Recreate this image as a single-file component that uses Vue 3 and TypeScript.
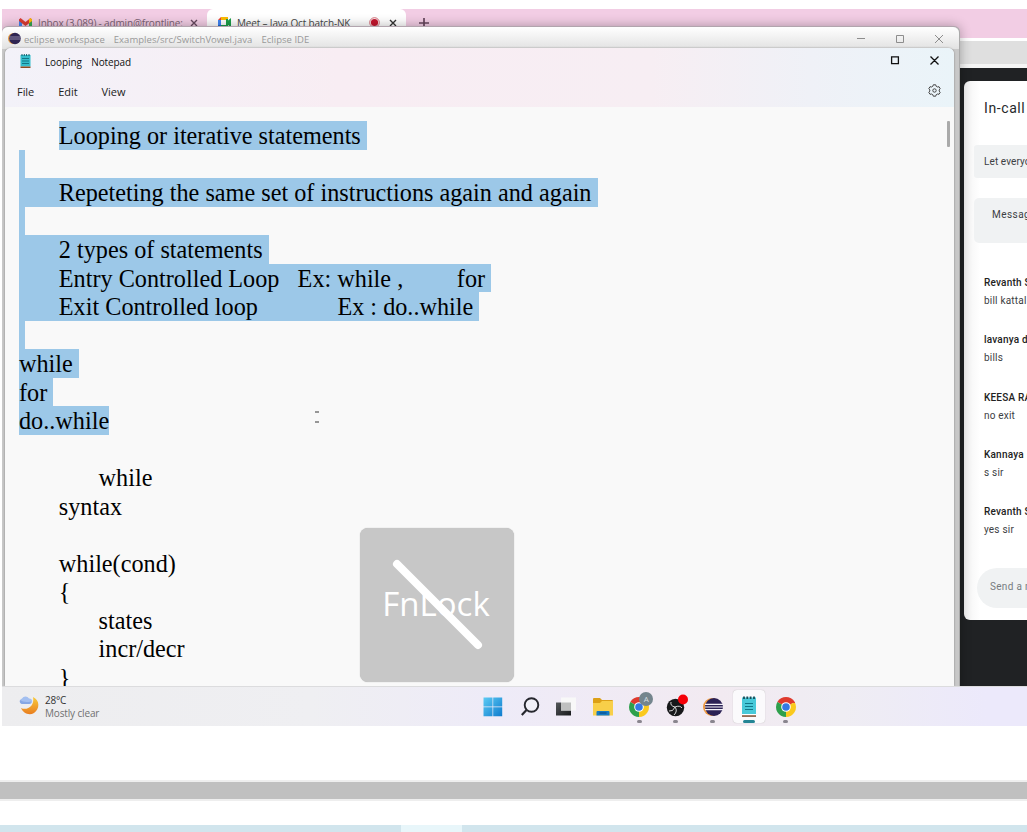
<script setup lang="ts">
interface EditorLine {
  lead?: string
  text: string
  selected?: boolean
}

interface ChatMessage {
  author: string
  body: string
}

const lines: EditorLine[] = [
  { lead: '\t', text: 'Looping or iterative statements ', selected: true },
  { text: ' ', selected: true },
  { text: '\tRepeteting the same set of instructions again and again ', selected: true },
  { text: ' ', selected: true },
  { text: '\t2 types of statements ', selected: true },
  { text: '\tEntry Controlled Loop\tEx: while ,\t\tfor ', selected: true },
  { text: '\tExit Controlled loop\t\tEx : do..while ', selected: true },
  { text: ' ', selected: true },
  { text: 'while ', selected: true },
  { text: 'for ', selected: true },
  { text: 'do..while', selected: true },
  { text: '' },
  { text: '\t\twhile' },
  { text: '\tsyntax' },
  { text: '' },
  { text: '\twhile(cond)' },
  { text: '\t{' },
  { text: '\t\tstates' },
  { text: '\t\tincr/decr' },
  { text: '\t}' },
]

const messages: ChatMessage[] = [
  { author: 'Revanth S', body: 'bill kattal' },
  { author: 'lavanya d', body: 'bills' },
  { author: 'KEESA RA', body: 'no exit' },
  { author: 'Kannaya', body: 's sir' },
  { author: 'Revanth S', body: 'yes sir' },
]
</script>

<template>
  <main class="page">
    <section class="screen">
      <div class="browser">
        <div class="tabs">
          <div class="tab inbox">
            <svg class="gmail" width="13" height="10" viewBox="0 0 13 10">
              <path d="M0 1v9h3V3z" fill="#4285f4" />
              <path d="M13 1v9h-3V3z" fill="#34a853" />
              <path d="M0 1.500L1.500 0 6.500 4 11.500 0 13 1.500V3L6.500 8 0 3z" fill="#dc3b32" />
              <path d="M10 1.200L11.500 0 13 1.500V3l-3 2.300z" fill="#fbbc04" />
            </svg>
            <span class="tab-title">Inbox (3,089) - admin@frontline:</span>
            <svg class="cross" width="8" height="8" viewBox="0 0 8 8"><path d="M1 1l6 6M7 1L1 7" /></svg>
          </div>
          <div class="tab active">
            <svg class="meet" width="13" height="11" viewBox="0 0 13 11">
              <path d="M3 0h7v3H3z" fill="#fbbc04" />
              <path d="M3 0v3H0z" fill="#ea4335" />
              <path d="M0 3h3v5H0z" fill="#4285f4" />
              <path d="M0 8h3v3H1L0 10z" fill="#1967d2" />
              <path d="M3 8h7v3H3zM9.500 4L13 1v9.500l-3.500-3z" fill="#1e9e4a" />
              <path d="M8 2h2v7H8z" fill="#1e9e4a" />
            </svg>
            <span class="tab-title meet-title">Meet – Java Oct batch-NK</span>
            <svg class="rec" width="11" height="11" viewBox="0 0 11 11">
              <circle cx="5.500" cy="5.500" r="4.800" fill="#fff" stroke="#cf5b68" stroke-width=".9" />
              <circle cx="5.500" cy="5.500" r="3.600" fill="#c5162e" />
            </svg>
            <svg class="cross dark" width="8" height="8" viewBox="0 0 8 8"><path d="M1 1l6 6M7 1L1 7" /></svg>
          </div>
          <svg class="plus" width="10" height="10" viewBox="0 0 10 10"><path d="M5 0v10M0 5h10" stroke="#65455c" stroke-width="1.700" /></svg>
        </div>
        <div class="toolbar"></div>
        <div class="call">
          <aside class="panel">
            <h2>In-call</h2>
            <div class="notice">Let everyo</div>
            <div class="info">Messag</div>
            <ul class="messages">
              <li v-for="(m, i) in messages" :key="i">
                <b>{{ m.author }}</b>
                <span>{{ m.body }}</span>
              </li>
            </ul>
            <div class="send">Send a m</div>
          </aside>
        </div>
      </div>

      <div class="eclipse">
        <header class="eclipse-bar">
          <svg width="13" height="13" viewBox="0 0 13 13">
            <circle cx="5.500" cy="6.500" r="5.500" fill="#e49b44" />
            <circle cx="7" cy="6.500" r="5.800" fill="#2e2452" />
            <path d="M1.500 5h11M1.500 7h11" stroke="#aaa1bd" stroke-width=".8" />
          </svg>
          <div class="eclipse-title"><span>eclipse workspace</span><span>Examples/src/SwitchVowel.java</span><span>Eclipse IDE</span></div>
          <svg class="controls" width="84" height="10" viewBox="0 0 84 10">
            <path d="M0 4.500h8M39.500 1.500h7v7h-7zM78 1l8 8M86 1l-8 8" />
          </svg>
        </header>
      </div>

      <div class="notepad">
        <header class="notepad-top">
          <div class="title-row">
            <svg width="11" height="14" viewBox="0 0 11 14">
              <rect x=".5" y="1" width="10" height="11.500" fill="#35bdcb" />
              <path d="M.5 12.500h10v1.500H.5z" fill="#8e4a20" />
              <path d="M2 0v2M4.300 0v2M6.600 0v2M9 0v2" stroke="#12616d" />
              <path d="M2 4.500h7M2 7h7M2 9.500h7" stroke="#157787" />
            </svg>
            <div class="note-title"><span>Looping</span><span>Notepad</span></div>
            <svg class="controls black" width="84" height="10" viewBox="0 0 84 10">
              <path d="M36.600.900h6.800v6.800h-6.800zM75.500.500l8 8M83.500.500l-8 8" />
            </svg>
          </div>
          <nav class="menu">
            <span>File</span><span>Edit</span><span>View</span>
            <svg class="gear" width="13" height="13" viewBox="0 0 13 13">
              <path d="M5.300.800h2.400l.5 1.500 1.300.7 1.500-.3 1.200 2-1 1.200v1.200l1 1.200-1.200 2-1.500-.3-1.300.7-.5 1.500H5.300l-.5-1.500-1.300-.7-1.500.3-1.200-2 1-1.200V5.900l-1-1.200 1.200-2 1.500.3 1.300-.7z" />
              <circle cx="6.500" cy="6.500" r="1.700" />
            </svg>
          </nav>
        </header>
        <div class="editor">
          <div v-for="(line, i) in lines" :key="i" class="line">{{ line.lead }}<span class="run" :class="{ selected: line.selected }">{{ line.text }}</span></div>
          <i class="thumb"></i>
        </div>
      </div>

      <svg class="ibeam" width="4" height="12" viewBox="0 0 4 12"><path d="M0 1h4M0 11h4" stroke="#777" stroke-width="1.600" /></svg>

      <div class="fnlock">
        <span>FnLock</span>
        <svg width="154" height="154" viewBox="0 0 154 154"><path d="M37 36L118 117" /></svg>
      </div>

      <footer class="taskbar">
        <div class="weather">
          <svg width="20" height="20" viewBox="0 0 20 20">
            <defs>
              <linearGradient id="moon" x1="0" y1="0" x2="0" y2="1"><stop stop-color="#f8cb3c" /><stop offset="1" stop-color="#e97e20" /></linearGradient>
            </defs>
            <path d="M14 2C21 5 21 14 15 18C10 21 4 18 2 13C8 16 16 11 14 2Z" fill="url(#moon)" />
            <path d="M3 9a2.800 2.800 0 0 1 0-5.400A4 4 0 0 1 10 3.500A2.800 2.800 0 0 1 11 9z" fill="#a3bff0" />
            <path d="M3 9a2.800 2.800 0 0 1-2-4q4 3 11 1.500Q12 9 10 9z" fill="#86a7e4" />
          </svg>
          <p><span class="temp">28°C</span><span class="sky">Mostly clear</span></p>
        </div>
        <div class="apps">
          <div class="app">
            <svg width="20" height="20" viewBox="0 0 20 20">
              <defs>
                <linearGradient id="win" gradientUnits="userSpaceOnUse" x1="0" y1="0" x2="20" y2="20"><stop stop-color="#5fcdf5" /><stop offset="1" stop-color="#0b78cc" /></linearGradient>
              </defs>
              <path d="M.5.500h9v9h-9zM10.200.500h9v9h-9zM.5 10.200h9v9h-9zM10.200 10.200h9v9h-9z" fill="url(#win)" />
            </svg>
          </div>
          <div class="app">
            <svg width="20" height="20" viewBox="0 0 20 20">
              <circle cx="11.500" cy="8" r="6.800" fill="#f1f0f8" stroke="#26272e" stroke-width="1.900" />
              <path d="M6.500 13L1.800 18" stroke="#26272e" stroke-width="2.200" />
            </svg>
          </div>
          <div class="app">
            <svg width="20" height="20" viewBox="0 0 20 20">
              <defs>
                <linearGradient id="pane" x1="0" y1="0" x2="1" y2="1"><stop stop-color="#54575a" /><stop offset="1" stop-color="#17191b" /></linearGradient>
              </defs>
              <path d="M0 5.500h15v13H0z" fill="url(#pane)" />
              <path d="M5 .5h15v13H5z" fill="#f8f8f8" />
              <path d="M5 5.500h10v8H5z" fill="#bfc0c0" />
            </svg>
          </div>
          <div class="app">
            <svg width="20" height="20" viewBox="0 0 20 20">
              <path d="M0 2q0-1 1-1h6l2 2h10q1 0 1 1v4H0z" fill="#dca017" />
              <path d="M0 6h7l2-2h11v14.500H0z" fill="#f8cf49" />
              <path d="M3.500 18.500V15q0-1 1-1h11q1 0 1 1v3.500z" fill="#1479c4" />
              <path d="M6.500 16h7" stroke="#0b4f88" stroke-width="1.200" />
            </svg>
          </div>
          <div class="app running">
            <svg width="20" height="20" viewBox="0 0 20 20">
              <path d="M10 10L1.340 5A10 10 0 0 1 18.660 5z" fill="#df3a2d" />
              <path d="M10 10L18.660 5A10 10 0 0 1 10 20z" fill="#fac91d" />
              <path d="M10 10V20A10 10 0 0 1 1.340 5z" fill="#2ea04c" />
              <path d="M10 5.400h9" stroke="#df3a2d" stroke-width="1" />
              <circle cx="10" cy="10" r="4.800" fill="#fff" /><circle cx="10" cy="10" r="3.800" fill="#3579e4" />
            </svg>
            <b class="badge">A</b>
          </div>
          <div class="app running">
            <svg width="20" height="20" viewBox="0 0 20 20">
              <circle cx="9.500" cy="10.500" r="8.700" fill="#17181a" />
              <path d="M5 5Q4 9 9 10Q14 8 16 11M9 10Q12 14 8 18M3 14Q7 15 9 10" fill="none" stroke="#d5d5d5" stroke-width="1" />
              <circle cx="17" cy="2.500" r="5" fill="#f50008" />
            </svg>
          </div>
          <div class="app running">
            <svg width="20" height="20" viewBox="0 0 20 20">
              <circle cx="9" cy="10" r="9" fill="#ee9a42" /><circle cx="11" cy="10" r="9" fill="#2b2155" />
              <path d="M2 7.300h18M2 10h18M2 12.700h18" stroke="#f5f3fa" stroke-width="1.200" />
            </svg>
          </div>
          <div class="app running current">
            <svg width="20" height="20" viewBox="0 0 20 20">
              <path d="M3 .5h14v17H3z" fill="#48c9d9" /><path d="M3 17h14v1.300H3z" fill="#fff" /><path d="M3 18.300h14v1.500H3z" fill="#7b4a2c" />
              <path d="M5-.5v2.500M8.300-.5v2.500M11.600-.5v2.500M15-.5v2.500" stroke="#174e59" stroke-width="1.800" />
              <path d="M6 6.500h8M6 9.500h8M6 12.500h8" stroke="#11788a" stroke-width="1.200" />
            </svg>
          </div>
          <div class="app running">
            <svg width="20" height="20" viewBox="0 0 20 20">
              <path d="M10 10L1.340 5A10 10 0 0 1 18.660 5z" fill="#df3a2d" />
              <path d="M10 10L18.660 5A10 10 0 0 1 10 20z" fill="#fac91d" />
              <path d="M10 10V20A10 10 0 0 1 1.340 5z" fill="#2ea04c" />
              <path d="M10 5.400h9" stroke="#df3a2d" stroke-width="1" />
              <circle cx="10" cy="10" r="4.800" fill="#fff" /><circle cx="10" cy="10" r="3.800" fill="#3579e4" />
            </svg>
          </div>
        </div>
      </footer>
    </section>
    <div class="divider"></div>
    <div class="next-slide"><i></i></div>
  </main>
</template>

<style>
body {
  background: #fff;
  overflow: hidden;
}
</style>

<style scoped>
.page {
  width: 1027px;
  height: 832px;
  overflow: hidden;
  background: #fff;
  padding-top: 9px;
  box-sizing: border-box;
  font-family: "Open Sans", "Noto Sans", sans-serif;
}
.page * {
  box-sizing: border-box;
}
svg {
  display: block;
  flex: none;
  overflow: visible;
}
.screen {
  position: relative;
  width: 1025px;
  height: 717px;
  margin-left: 2px;
  overflow: hidden;
  background: #dcdcdc;
}
.browser {
  height: 677px;
  display: flex;
  flex-direction: column;
}
.tabs {
  height: 29px;
  background: #f2cde4;
  display: flex;
}
.tab {
  height: 27px;
  display: flex;
  align-items: center;
  white-space: nowrap;
}
.inbox {
  width: 205px;
  padding-left: 17px;
}
.active {
  width: 199px;
  padding-left: 11px;
  background: #fff;
  border-radius: 6px 6px 0 0;
}
.tab-title {
  font-size: 10px;
  letter-spacing: -0.16px;
  color: #7b6273;
  margin-left: 6px;
  width: 144px;
}
.meet-title {
  color: #474747;
  width: 127px;
}
.rec {
  margin-left: 5px;
}
.cross {
  fill: none;
  stroke: #67495f;
  stroke-width: 1.4;
  margin-left: 8px;
}
.cross.dark {
  stroke: #333;
  margin-left: 9px;
}
.plus {
  margin: 9px 0 0 13px;
}
.toolbar {
  height: 30px;
  background: #dfdfdf;
  border-top: 3px solid #fff;
  border-bottom: 4px solid #f5f5f5;
}
.call {
  flex: 1;
  background: #202224;
  padding: 13px 0 0 962px;
}
.panel {
  width: 63px;
  height: 539px;
  border-radius: 6px 0 0 6px;
  background: linear-gradient(90deg, #f2f2f2, #fff 16px);
  overflow: hidden;
  white-space: nowrap;
  font-family: Roboto, sans-serif;
  color: #3c4043;
}
.panel h2 {
  font: 400 14px/20px Roboto, sans-serif;
  letter-spacing: 0.6px;
  color: #26282b;
  margin: 17px 0 0 20px;
}
.notice {
  margin: 27px 0 0 10px;
  height: 33px;
  padding-left: 10px;
  line-height: 33px;
  font-size: 10px;
  letter-spacing: 0.1px;
  background: #f0f2f3;
  border-radius: 3px 0 0 3px;
}
.info {
  margin: 20px 0 0 10px;
  height: 45px;
  padding: 10px 0 0 18px;
  font-size: 10px;
  line-height: 13px;
  letter-spacing: 0.45px;
  background: #f0f2f3;
  border-radius: 5px 0 0 5px;
}
.messages {
  list-style: none;
  margin: 31px 0 0;
  padding: 0 0 0 20px;
}
.messages li {
  height: 57.3px;
  display: flex;
  flex-direction: column;
  font-size: 10px;
  line-height: 18px;
  letter-spacing: 0.2px;
}
.messages b {
  font-weight: 500;
  color: #222;
}
.send {
  margin: 8px 0 0 13px;
  height: 40px;
  border-radius: 20px 0 0 20px;
  background: #f0f2f3;
  padding-left: 13px;
  font-size: 10px;
  line-height: 38px;
  letter-spacing: 0.3px;
  color: #777c80;
}
.eclipse {
  position: absolute;
  left: 0;
  top: 17px;
  width: 957.5px;
  height: 665px;
  background: #c8c8c8;
  border-top: 1px solid #b2a5ae;
  border-right: 1px solid #aaa;
  border-radius: 6px 6px 0 0;
  box-shadow: 0 0 12px rgba(0, 0, 0, 0.3);
}
.eclipse-bar {
  height: 22px;
  padding-left: 6px;
  display: flex;
  align-items: center;
  background: linear-gradient(#fff, #e2e2e2);
  border-radius: 6px 6px 0 0;
}
.eclipse-title {
  display: flex;
  gap: 9px;
  margin: 2px 0 0 3px;
  font-size: 9.5px;
  letter-spacing: 0.03px;
  color: #999;
  white-space: nowrap;
}
.controls {
  margin-left: auto;
  fill: none;
  stroke: #8d8d8d;
}
.eclipse-bar .controls {
  margin: 1px 17.5px 0 auto;
}
.controls.black {
  stroke: #111;
  stroke-width: 1.3;
  margin-right: 15px;
}
.notepad {
  position: absolute;
  left: 3px;
  top: 39px;
  width: 949px;
  height: 638px;
  border-radius: 6px 6px 0 0;
  background: #f9f9f9;
  overflow: hidden;
  box-shadow: 0 0 2px rgba(0, 0, 0, 0.4);
}
.notepad-top {
  height: 59px;
  background: linear-gradient(90deg, #f3f2f9, #f8edf3 35%, #f7eef3 68%, #eff1f7 85%, #eaf4f9);
}
.title-row {
  height: 26px;
  display: flex;
  align-items: center;
  padding-left: 15px;
}
.note-title {
  display: flex;
  gap: 9.5px;
  margin: 1px 0 0 14px;
  font-size: 10px;
  letter-spacing: -0.1px;
  color: #111;
}
.menu {
  height: 33px;
  display: flex;
  align-items: center;
  padding: 1px 13px 0 12px;
  font-size: 11px;
  color: #222;
}
.menu span {
  margin-right: 24px;
  letter-spacing: -0.05px;
}
.gear {
  margin: -2px 0 0 auto;
  fill: none;
  stroke: #444;
  stroke-width: 1;
}
.editor {
  position: relative;
  padding: 14px 0 0 14px;
  font-family: "Liberation Serif", serif;
  font-size: 24.23px;
  color: #000;
}
.line {
  height: 28.53px;
  line-height: 29.8px;
  white-space: pre;
  tab-size: 39.8px;
}
.run {
  display: inline-block;
  height: 28.53px;
  vertical-align: top;
}
.selected {
  background: #9cc8e8;
}
.thumb {
  position: absolute;
  right: 4.5px;
  top: 14px;
  width: 2.5px;
  height: 26px;
  border-radius: 1px;
  background: #aaa;
}
.ibeam {
  position: absolute;
  left: 313px;
  top: 402px;
}
.fnlock {
  position: absolute;
  left: 358px;
  top: 519px;
  width: 154px;
  height: 154px;
  border-radius: 8px;
  background: #c7c7c7;
  color: #fff;
  font-size: 33px;
  line-height: 152px;
  padding-right: 2px;
  text-align: center;
  box-shadow: 0 0 1px #aaa;
}
.fnlock svg {
  position: absolute;
  left: 0;
  top: 0;
  fill: none;
  stroke: #fff;
  stroke-width: 8;
  stroke-linecap: round;
}
.taskbar {
  position: absolute;
  left: 0;
  bottom: 0;
  width: 100%;
  height: 40px;
  border-top: 1px solid #dcdcde;
  background: linear-gradient(90deg, #ededef, #efeff2 30%, #eeebf8 48%, #f2eaf1 70%, #efedf3 82%, #ece9fb 96%);
  display: flex;
}
.weather {
  width: 475px;
  display: flex;
  padding: 8px 0 0 17px;
}
.weather p {
  margin: -1px 0 0 6px;
  display: flex;
  flex-direction: column;
  font-size: 10px;
  line-height: 13px;
}
.temp {
  color: #333;
  letter-spacing: -0.2px;
}
.sky {
  color: #707070;
  letter-spacing: -0.15px;
}
.apps {
  display: flex;
  gap: 4.6px;
  padding-top: 3px;
}
.app {
  position: relative;
  width: 32px;
  height: 33px;
  padding: 6.5px 6px 0;
}
.running::after {
  content: "";
  position: absolute;
  left: 13.5px;
  bottom: 0.5px;
  width: 5px;
  height: 2.5px;
  border-radius: 2px;
  background: #89858e;
}
.current {
  background: #fbfafc;
  border-radius: 4px;
  box-shadow: 0 0 1px #aaa;
}
.current::after {
  left: 10px;
  width: 12px;
  background: #248595;
}
.badge {
  position: absolute;
  left: 16px;
  top: 2px;
  width: 14px;
  height: 14px;
  border-radius: 50%;
  background: #74858d;
  color: #d5dde0;
  font-size: 8px;
  line-height: 14px;
  text-align: center;
  font-weight: 400;
}
.divider {
  margin-top: 54px;
  height: 21px;
  background: #c0c0c0;
  border: solid #eee;
  border-width: 2px 0;
}
.next-slide {
  margin-top: 24px;
  height: 7px;
  background: #d1e5ed;
}
.next-slide i {
  display: block;
  margin-left: 401px;
  width: 61px;
  height: 7px;
  background: #e8f6fa;
}
</style>
